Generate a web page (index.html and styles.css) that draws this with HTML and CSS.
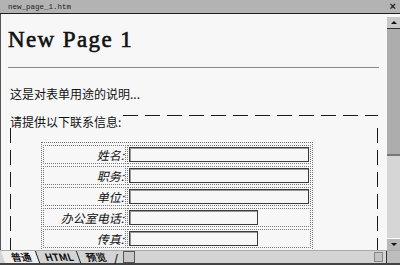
FILE: index.html
```html
<!DOCTYPE html>
<html lang="zh">
  <head>
    <meta charset="UTF-8" />
    <title>new_page_1.htm</title>
    <link rel="stylesheet" href="styles.css">
  </head>
  <body>
    <div class="window">
      <div class="titlebar">
        <span class="title">new_page_1.htm</span>
        <span class="close">×</span>
      </div>
      <div class="main">
        <div class="page">
          <h1>New Page 1</h1>
          <hr />
          <p class="desc">这是对表单用途的说明...</p>
          <div class="contact">
            <div class="legend">
              <span class="legend-text">请提供以下联系信息:</span>
              <i class="legend-line"></i>
            </div>
            <div class="contact-body">
              <table class="form-table">
                <tr>
                  <td class="label">姓名:</td>
                  <td class="field"><input class="long" type="text" /></td>
                </tr>
                <tr>
                  <td class="label">职务:</td>
                  <td class="field"><input class="long" type="text" /></td>
                </tr>
                <tr>
                  <td class="label">单位:</td>
                  <td class="field"><input class="long" type="text" /></td>
                </tr>
                <tr>
                  <td class="label">办公室电话:</td>
                  <td class="field"><input class="short" type="text" /></td>
                </tr>
                <tr>
                  <td class="label">传真:</td>
                  <td class="field"><input class="short" type="text" /></td>
                </tr>
              </table>
            </div>
          </div>
        </div>
        <div class="vscroll">
          <div class="sbtn up"></div>
          <div class="thumb"></div>
          <div class="track"></div>
          <div class="sbtn down"></div>
        </div>
      </div>
      <div class="bottombar">
        <div class="tabs">
          <span class="tab active">普通</span>
          <span class="tab">HTML</span>
          <span class="tab">预览</span>
          <span class="tab-end">/</span>
          <span class="tab-scroll"></span>
        </div>
        <div class="hscroll"><span class="hbtn"></span></div>
        <div class="corner"></div>
      </div>
    </div>
  </body>
</html>
```

FILE: styles.css
```css
body {
  margin: 0;
  padding: 0;
  background-color: #c4c4c4;
  font-family: "Liberation Sans", "Noto Sans CJK SC", sans-serif;
}
.window {
  width: 400px;
  height: 265px;
  display: flex;
  flex-direction: column;
  overflow: hidden;
}
.titlebar {
  height: 13px;
  border-bottom: 1px solid #1e1e1e;
  background-color: #b3b3b3;
  display: flex;
  justify-content: space-between;
  align-items: center;
  padding: 0 4px 0 8px;
}
.title {
  font-family: "Liberation Mono", monospace;
  font-size: 7.5px;
  color: #222;
}
.close {
  font-size: 11px;
  font-weight: bold;
  line-height: 11px;
  color: #222;
}
.main {
  height: 236px;
  display: flex;
}
.page {
  flex: 1;
  background-color: #f7f7f7;
  border-left: 1px solid #555;
  padding: 0 8px 0 7px;
  overflow: hidden;
}
h1 {
  margin: 12px 0 0;
  font-family: "Liberation Serif", serif;
  font-size: 23px;
  line-height: 28px;
  letter-spacing: 1.4px;
  font-weight: normal;
  -webkit-text-stroke: 0.6px #111;
  color: #111;
}
hr {
  margin: 13px 0 0;
  border: 0;
  border-top: 1px solid #888;
}
.desc {
  margin: 19px 0 0 2px;
  font-family: "Noto Sans CJK SC", sans-serif;
  font-size: 12px;
  line-height: 14px;
  color: #111;
}
.contact {
  margin: 14px 0 0 2px;
  width: 368px;
}
.legend {
  display: flex;
  align-items: flex-start;
}
.legend-text {
  font-family: "Noto Sans CJK SC", sans-serif;
  font-size: 12px;
  line-height: 13px;
  color: #111;
  padding-right: 2px;
}
.legend-line {
  flex: 1;
  height: 1px;
  background-image: repeating-linear-gradient(to right, #1a1a1a 0 15px, transparent 15px 22px);
}
.contact-body {
  height: 130px;
  padding: 14px 0 0 31px;
  background-image:
    repeating-linear-gradient(to bottom, #1a1a1a 0 15px, transparent 15px 22px),
    repeating-linear-gradient(to bottom, #1a1a1a 0 15px, transparent 15px 22px);
  background-size: 1px 100%, 1px 100%;
  background-position: left top, right top;
  background-repeat: no-repeat;
}
.form-table {
  border: 1px dotted #777;
  border-spacing: 1px 2px;
  width: 272px;
}
.form-table td {
  border: 1px dotted #777;
  padding: 1px;
}
.label {
  width: 80px;
  text-align: right;
  font-family: "Noto Sans CJK SC", sans-serif;
  font-size: 12px;
  line-height: 15px;
  font-style: italic;
  color: #111;
  white-space: nowrap;
}
.field input {
  display: block;
  box-sizing: border-box;
  height: 15px;
  margin: 0;
  padding: 0;
  border: 1px solid #3a3a3a;
  box-shadow: inset 1px 1px 0 #999;
  background-color: #f7f7f7;
}
.long {
  width: 180px;
}
.short {
  width: 129px;
}
.vscroll {
  width: 13px;
  display: flex;
  flex-direction: column;
  background-color: #f7f7f7;
  padding-top: 3px;
}
.sbtn {
  height: 11px;
  background-color: #c8c8c8;
  border-bottom: 1px solid #333;
  position: relative;
}
.sbtn.down {
  border-bottom: 0;
  border-top: 1px solid #fff;
  background-color: #b8b8b8;
}
.sbtn::after {
  content: "";
  position: absolute;
  left: 4px;
  top: 4px;
  border-left: 3px solid transparent;
  border-right: 3px solid transparent;
}
.sbtn.up::after {
  border-bottom: 3px solid #111;
}
.sbtn.down::after {
  border-top: 3px solid #111;
}
.thumb {
  height: 125px;
  background-color: #adadad;
  border-bottom: 2px solid #777;
}
.track {
  flex: 1;
  background-color: #d6d6d6;
}
.bottombar {
  height: 15px;
  display: flex;
  background-color: #d4d4d4;
  border-top: 1px solid #aaa;
  border-bottom: 2px solid #444;
  box-sizing: border-box;
}
.tabs {
  display: flex;
  align-items: center;
  padding-left: 3px;
  font-family: "Noto Sans CJK SC", sans-serif;
  font-size: 10px;
  font-weight: bold;
  color: #111;
}
.tab {
  padding: 0 5px 0 7px;
  border-left: 1px solid #222;
  transform: skewX(20deg);
  line-height: 12px;
}
.tab.active {
  background-color: #f0f0f0;
  border-left: 0;
  padding: 0 6px 0 8px;
}
.tab-end {
  padding: 0 5px 0 3px;
}
.tab-scroll {
  width: 10px;
  height: 10px;
  border: 1px solid #555;
  background-color: #c8c8c8;
}
.hscroll {
  flex: 1;
  display: flex;
  justify-content: flex-end;
  align-items: center;
  padding-right: 3px;
}
.hbtn {
  width: 7px;
  height: 8px;
  background-color: #c4c4c4;
  border: 1px solid #888;
}
.corner {
  width: 13px;
  background-color: #bdbdbd;
  border-left: 1px solid #333;
}
```
